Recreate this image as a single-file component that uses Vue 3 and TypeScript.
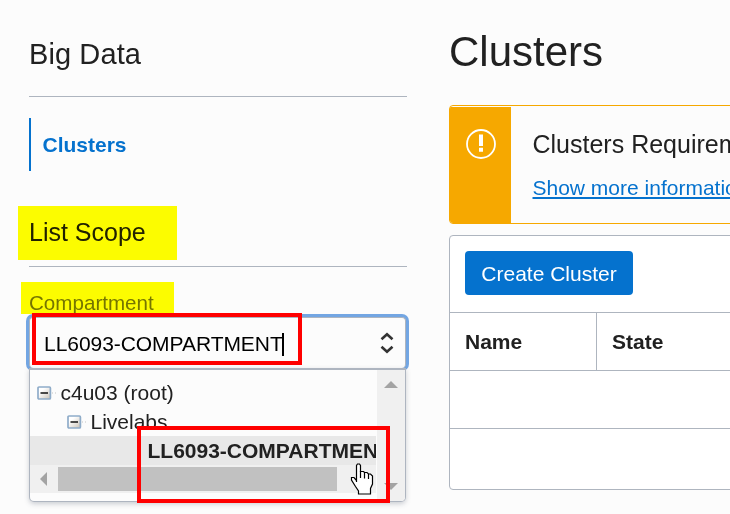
<script setup lang="ts">
interface TreeNode { label: string; depth: number; selected?: boolean }

const nodes: TreeNode[] = [
  { label: 'c4u03 (root)', depth: 0 },
  { label: 'Livelabs', depth: 1 },
  { label: 'LL6093-COMPARTMENT', depth: 2, selected: true },
]
const columns: string[] = ['Name', 'State']
const emptyRows = 2
</script>

<template>
  <div class="page">
    <aside class="side">
      <h2 class="product">Big Data</h2>
      <nav class="nav"><a class="nav-item">Clusters</a></nav>
      <h3 class="scope"><span>List Scope</span></h3>
      <label class="field-label"><span>Compartment</span></label>
      <div class="combo">
        <span class="value">LL6093-COMPARTMENT</span><i class="caret"></i>
        <svg class="chevrons" width="14" height="24" viewBox="0 0 14 24">
          <path d="M1.5 8.2 L7 3.2 L12.5 8.2 M1.5 15.8 L7 20.8 L12.5 15.8" />
        </svg>
      </div>
      <div class="menu">
        <div class="menu-main">
          <div class="tree">
            <div v-for="n in nodes" :key="n.label" class="node" :class="['d' + n.depth, { selected: n.selected }]">
              <svg v-if="!n.selected" class="toggle" width="20" height="14" viewBox="0 0 20 14">
                <defs>
                  <linearGradient id="tg" x1="0" y1="0" x2="1" y2="1">
                    <stop offset="0.3" stop-color="#ffffff" />
                    <stop offset="1" stop-color="#c9c1b5" />
                  </linearGradient>
                </defs>
                <rect x="1" y="1" width="12.4" height="12" rx="1" fill="url(#tg)" stroke="#8facc9" stroke-width="1.7" />
                <path d="M3.5 7H11" stroke="#111" stroke-width="1.7" />
                <path d="M15 7h1M18 7h1" stroke="#c4c4c4" />
              </svg>
              <span>{{ n.label }}</span>
            </div>
          </div>
          <div class="hbar">
            <svg width="28" height="28" viewBox="0 0 28 28"><path d="M17 7V21L10 14Z" /></svg>
            <div class="thumb"></div>
          </div>
        </div>
        <div class="vbar">
          <svg width="28" height="28" viewBox="0 0 28 28"><path d="M7 18H21L14 11Z" /></svg>
          <svg width="28" height="28" viewBox="0 0 28 28"><path d="M7 10H21L14 17Z" /></svg>
        </div>
      </div>
    </aside>

    <main class="main">
      <h1>Clusters</h1>
      <section class="notice">
        <div class="notice-icon">
          <svg width="30" height="30" viewBox="0 0 30 30">
            <circle cx="15" cy="15" r="14" fill="none" stroke="#fff" stroke-width="1.8" />
            <path d="M13 5.5h4v11.5h-4zM13 18.7h4v4h-4z" fill="#fff" />
          </svg>
        </div>
        <div class="notice-body">
          <div class="notice-title">Clusters Requirements</div>
          <a class="more">Show more information</a>
        </div>
      </section>
      <section class="panel">
        <div class="toolbar"><button>Create Cluster</button></div>
        <div class="row head"><div v-for="c in columns" :key="c" class="cell">{{ c }}</div></div>
        <div v-for="i in emptyRows" :key="i" class="row"></div>
      </section>
    </main>

    <div class="mark scope-mark"></div>
    <div class="mark label-mark"></div>
    <div class="box value-box"></div>
    <div class="box option-box"></div>
    <svg class="hand" width="24" height="33" viewBox="0 0 24 33">
      <path d="M6.5 19V2.5L7.5 1H9.5L10.5 2.5V8.5H13.5L14.5 9.5H17L18.5 11H20.5L22.5 13V21L20.5 25.5V31H8.5V28L5.5 23.5L1.5 17V14.5H4L6.5 17.5Z" fill="#fff" stroke="#000" stroke-width="1.2" />
      <path d="M10.5 8V15M14.5 9.5V15.5M18.5 11V16" fill="none" stroke="#000" stroke-width="1.2" />
    </svg>
  </div>
</template>

<style>
body { overflow: hidden; background: #fcfcfc; }
</style>

<style scoped>
* { box-sizing: border-box; }
.page {
  position: relative; display: flex; gap: 42px; width: 730px; height: 514px; padding-left: 29px;
  overflow: hidden; background: #fcfcfc; color: #212121; font: 21px "Liberation Sans", Arial, sans-serif;
}
h1, h2, h3 { margin: 0; font-weight: 400; }
.side { width: 378px; flex: none; }
.product { height: 97px; padding-top: 38px; line-height: 32px; font-size: 29px; letter-spacing: 0.1px; border-bottom: 1px solid #aeb5bf; }
.nav { padding-top: 21px; }
.nav-item { display: block; height: 53px; padding-left: 11.5px; border-left: 2px solid #0572ce; color: #0572ce; font-weight: 700; line-height: 53px; }
.scope { height: 96px; padding-top: 46px; line-height: 30px; font-size: 25px; border-bottom: 1px solid #aeb5bf; }
.field-label { display: block; height: 50px; padding-top: 23px; line-height: 26px; font-size: 20.6px; color: #767676; }
.combo {
  display: flex; align-items: center; width: 377px; height: 51px; padding: 2px 11px 0 14px;
  border: 1px solid #aeb5bf; border-bottom: 0; border-radius: 4px; box-shadow: 0 0 0 3px #73a6e3; background: #fcfcfc; color: #000;
}
.value { letter-spacing: -0.05px; }
.caret { width: 2px; height: 23px; margin-left: -0.5px; background: #000; }
.chevrons { margin: -3px 0 0 auto; fill: none; stroke: #333; stroke-width: 2.6; }
.menu {
  position: relative; display: flex; width: 377px; height: 134px; border: 1px solid #aeb5c0; border-top-width: 2px;
  border-radius: 0 0 5px 5px; background: #fcfcfc; box-shadow: 0 2px 5px rgba(60, 70, 90, 0.25); overflow: hidden;
}
.menu-main { width: 347px; padding-right: 1px; }
.tree { padding-top: 8px; overflow: hidden; }
.node { display: flex; align-items: center; height: 29px; white-space: nowrap; }
.node span { margin-left: 3.5px; }
.toggle { flex: none; }
.d0 { padding-left: 7px; }
.d1 { padding-left: 37px; }
.d2 { padding-left: 114px; }
.selected { background: #e8e8e8; font-weight: 700; }
.hbar { display: flex; align-items: center; height: 28px; background: #f0f0f0; fill: #a3a3a3; }
.thumb { width: 279px; height: 24px; background: #c1c1c1; }
.vbar { display: flex; flex-direction: column; justify-content: space-between; width: 28px; background: #f0f0f0; fill: #a3a3a3; }
.main { flex: 1; min-width: 0; }
h1 { height: 105px; padding-top: 28px; font-size: 42px; line-height: 48px; }
.notice { display: flex; width: 340px; height: 119px; border: 1px solid #f6a800; border-radius: 4px; overflow: hidden; white-space: nowrap; }
.notice-icon { width: 61px; margin-top: 1px; padding: 22px 0 0 16px; background: #f6a800; }
.notice-body { padding: 23px 0 0 21.5px; }
.notice-title { line-height: 30px; font-size: 25px; }
.more { display: inline-block; margin-top: 18px; line-height: 22px; color: #0572ce; text-decoration: underline; text-decoration-thickness: 2px; text-underline-offset: 2px; text-decoration-skip-ink: none; }
.panel { width: 340px; height: 255px; margin-top: 11px; border: 1px solid #aeb5bf; border-radius: 4px; background: #fff; }
.toolbar { height: 76px; padding: 15px; }
button { width: 168px; height: 44px; padding: 2px 0 0; border: 0; border-radius: 4px; background: #0572ce; color: #fff; font: inherit; }
.row { display: flex; height: 58px; border-top: 1px solid #aeb5bf; }
.cell { width: 146px; padding-left: 15px; line-height: 58px; font-weight: 700; }
.cell + .cell { border-left: 1px solid #aeb5bf; }
.mark { position: absolute; background: #ff0; mix-blend-mode: multiply; }
.scope-mark { left: 18px; top: 206px; width: 159px; height: 54px; }
.label-mark { left: 21px; top: 282px; width: 153px; height: 32px; }
.box { position: absolute; border: 4px solid #f00; }
.value-box { left: 32px; top: 313px; width: 270px; height: 52px; }
.option-box { left: 137px; top: 426px; width: 253px; height: 77px; }
.hand { position: absolute; left: 350px; top: 463px; }
</style>
